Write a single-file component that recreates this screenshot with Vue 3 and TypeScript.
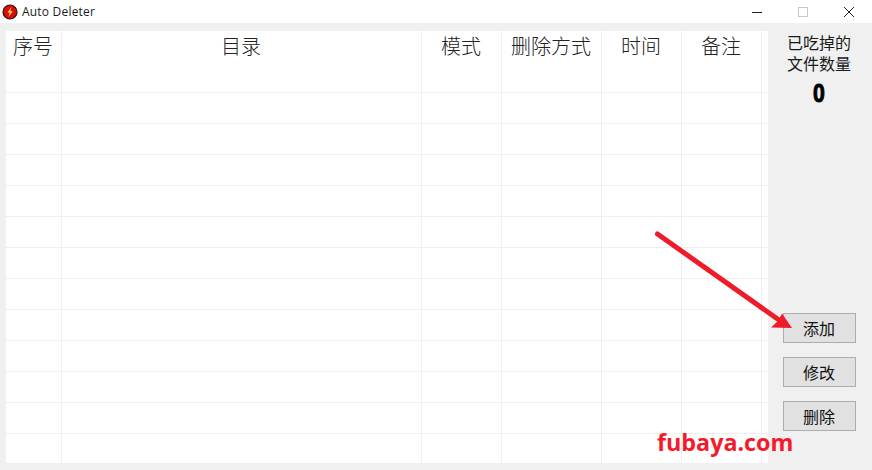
<template>
  <div class="window">
    <!-- title bar -->
    <header class="titlebar">
      <svg class="app-icon" width="16" height="16" viewBox="0 0 16 16">
        <circle cx="8" cy="8" r="7" fill="#d40f0f" stroke="#3a0a0a" stroke-width="1.2" />
        <path d="M9.6 2.8 5.4 8.6h2.4L6.4 13l4.4-5.8H8.3z" fill="#ffd23a" />
      </svg>
      <span class="title">Auto Deleter</span>
      <div class="controls">
        <svg width="12" height="12" viewBox="0 0 12 12"><path d="M1 6.5h10" stroke="#222" stroke-width="1" /></svg>
        <svg width="12" height="12" viewBox="0 0 12 12"><rect x="1.5" y="1.5" width="9" height="9" fill="none" stroke="#c8c8c8" /></svg>
        <svg width="12" height="12" viewBox="0 0 12 12"><path d="M1 1l10 10M11 1 1 11" stroke="#222" stroke-width="1" /></svg>
      </div>
    </header>

    <div class="body">
      <!-- list -->
      <section class="table">
        <div class="row head">
          <div v-for="c in columns" :key="c" class="cell">{{ c }}</div>
          <div class="cell filler"></div>
        </div>
        <div v-for="n in 12" :key="n" class="row line">
          <div v-for="c in columns" :key="c" class="cell"></div>
          <div class="cell filler"></div>
        </div>
        <div class="row last">
          <div v-for="c in columns" :key="c" class="cell"></div>
          <div class="cell filler"></div>
        </div>
      </section>

      <!-- right side -->
      <aside class="side">
        <p class="label">已吃掉的<br />文件数量</p>
        <p class="count">{{ eaten }}</p>
        <div class="buttons">
          <button v-for="b in actions" :key="b" type="button">{{ b }}</button>
        </div>
      </aside>
    </div>

    <!-- annotation on top of the screenshot -->
    <svg class="arrow" width="872" height="470" viewBox="0 0 872 470">
      <path d="M657.5 234 779 320" stroke="#ee1c2a" stroke-width="5" stroke-linecap="round" fill="none" />
      <path d="M792 328 771 327.5 778 321 782 313.5z" fill="#ee1c2a" />
    </svg>
    <span class="mark">fubaya.com</span>
  </div>
</template>

<script setup lang="ts">
const columns: string[] = ["序号", "目录", "模式", "删除方式", "时间", "备注"];
const actions: string[] = ["添加", "修改", "删除"];
const eaten = 0;
</script>

<style>
body {
  margin: 0;
  overflow: hidden;
}
</style>

<style scoped>
.window {
  position: relative;
  width: 872px;
  height: 470px;
  display: flex;
  flex-direction: column;
  background: #f0f0f0;
  font-family: "Noto Sans CJK SC", "Noto Sans", sans-serif;
  color: #1a1a1a;
  overflow: hidden;
}

/* title bar */
.titlebar {
  height: 23px;
  background: #fff;
  display: flex;
  align-items: center;
  padding-left: 2px;
}
.app-icon {
  margin-right: 4px;
}
.title {
  font-family: "Open Sans", sans-serif;
  font-size: 12px;
  letter-spacing: 0.2px;
}
.controls {
  margin-left: auto;
  display: flex;
  gap: 34px;
  padding-right: 17px;
}

.body {
  flex: 1;
  display: flex;
  padding: 8px 0 7px 6px;
  min-height: 0;
}

/* table */
.table {
  width: 762px;
  background: #fff;
  display: flex;
  flex-direction: column;
}
.row {
  display: grid;
  grid-template-columns: 56px 360px 80px 100px 80px 80px 6px;
  height: 31px;
  flex: none;
}
.row.line {
  border-bottom: 1px solid #efefef;
  box-sizing: border-box;
}
.row.last {
  flex: 1;
  height: auto;
}
.cell {
  box-sizing: border-box;
  border-right: 1px solid #efefef;
}
.cell.filler {
  border-right: none;
}
.head .cell {
  padding-right: 1px;
  font-size: 20px;
  font-weight: 300;
  line-height: 29px;
  text-align: center;
  color: #222;
}
.head .cell.filler {
  padding-right: 0;
}

/* side panel */
.side {
  flex: 1;
  display: flex;
  flex-direction: column;
  align-items: center;
  padding-right: 2px;
}
.label {
  margin: 1px 0 0;
  font-size: 16px;
  line-height: 21px;
  text-align: center;
}
.count {
  margin: 6px 0 0;
  font-family: "Liberation Sans", sans-serif;
  font-size: 25px;
  font-weight: 700;
  line-height: 26px;
  color: #000;
  -webkit-text-stroke: 1px #000;
  transform: scaleX(0.85);
}
.buttons {
  margin-top: auto;
  margin-bottom: 32px;
  display: flex;
  flex-direction: column;
  gap: 14px;
}
button {
  width: 73px;
  height: 30px;
  padding: 0;
  background: #e1e1e1;
  border: 1px solid #adadad;
  font-family: inherit;
  font-size: 16px;
  color: #111;
}

/* annotation */
.arrow {
  position: absolute;
  left: 0;
  top: 0;
  pointer-events: none;
}
.mark {
  position: absolute;
  left: 657px;
  top: 427px;
  font-family: "Open Sans", sans-serif;
  font-size: 23.3px;
  font-weight: 700;
  line-height: 30px;
  color: #f5192b;
}
</style>
